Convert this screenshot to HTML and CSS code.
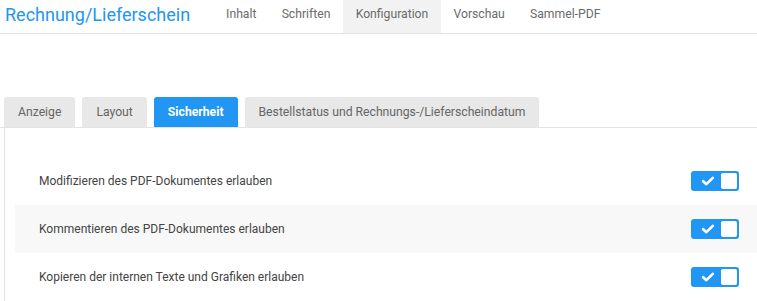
FILE: index.html
```html
<!DOCTYPE html>
<html lang="de">
<head>
    <meta charset="UTF-8">
    <title>Rechnung/Lieferschein - Konfiguration</title>
    <link rel="stylesheet" href="styles.css">
</head>
<body>
    <!-- Kopfzeile -->
    <header class="topbar">
        <div class="title">Rechnung/Lieferschein</div>
        <nav class="menu">
            <a href="#">Inhalt</a>
            <a href="#">Schriften</a>
            <a href="#" class="active">Konfiguration</a>
            <a href="#">Vorschau</a>
            <a href="#">Sammel-PDF</a>
        </nav>
    </header>

    <!-- Reiter -->
    <div class="tabs">
        <button class="tab">Anzeige</button>
        <button class="tab">Layout</button>
        <button class="tab selected">Sicherheit</button>
        <button class="tab">Bestellstatus und Rechnungs-/Lieferscheindatum</button>
    </div>

    <!-- Einstellungen -->
    <section class="panel">
        <div class="row">
            <span>Modifizieren des PDF-Dokumentes erlauben</span>
            <div class="switch">
                <svg class="check" width="12" height="10" viewBox="0 0 12 10"><path d="M1.2 5.2 L4.4 8.2 L10.8 1.8" fill="none" stroke="#fff" stroke-width="2.6" stroke-linecap="round" stroke-linejoin="round"/></svg>
                <span class="knob"></span>
            </div>
        </div>
        <div class="row alt">
            <span>Kommentieren des PDF-Dokumentes erlauben</span>
            <div class="switch">
                <svg class="check" width="12" height="10" viewBox="0 0 12 10"><path d="M1.2 5.2 L4.4 8.2 L10.8 1.8" fill="none" stroke="#fff" stroke-width="2.6" stroke-linecap="round" stroke-linejoin="round"/></svg>
                <span class="knob"></span>
            </div>
        </div>
        <div class="row">
            <span>Kopieren der internen Texte und Grafiken erlauben</span>
            <div class="switch">
                <svg class="check" width="12" height="10" viewBox="0 0 12 10"><path d="M1.2 5.2 L4.4 8.2 L10.8 1.8" fill="none" stroke="#fff" stroke-width="2.6" stroke-linecap="round" stroke-linejoin="round"/></svg>
                <span class="knob"></span>
            </div>
        </div>
    </section>
</body>
</html>
```

FILE: styles.css
```css
* {
    margin: 0;
    padding: 0;
    box-sizing: border-box;
    font-family: 'Roboto', 'Liberation Sans', sans-serif;
}

body {
    background: #fff;
    overflow: hidden;
}

/* Kopfzeile */
.topbar {
    display: flex;
    align-items: stretch;
    height: 34px;
    border-bottom: 1px solid #e3e3e3;
    padding-left: 5px;
}

.title {
    color: #2196f3;
    font-size: 18px;
    line-height: 29px;
    width: 208.5px;
}

.menu {
    display: flex;
}

.menu a {
    color: #6b6b6b;
    text-decoration: none;
    font-size: 12.2px;
    line-height: 29px;
    padding: 0 12.6px;
}

.menu a.active {
    background: #f2f2f2;
}

/* Reiter */
.tabs {
    display: flex;
    gap: 7px;
    margin-top: 63px;
    padding-left: 4px;
    border-bottom: 1px solid #e3e3e3;
}

.tab {
    border: none;
    background: #e8e8e8;
    color: #666;
    font-size: 12.2px;
    height: 30px;
    padding: 0 14px;
    border-radius: 3px 3px 0 0;
    cursor: pointer;
}

.tab.selected {
    background: #2196f3;
    color: #fff;
    font-weight: bold;
}

/* Einstellungen */
.panel {
    margin-left: 4px;
    border-left: 1px solid #e3e3e3;
    padding: 29px 0 0 10px;
}

.row {
    display: flex;
    justify-content: space-between;
    align-items: center;
    height: 48px;
    padding: 0 18px 0 24px;
    font-size: 12px;
    color: #444;
}

.row.alt {
    background: #f8f8f8;
}

.switch {
    display: flex;
    align-items: center;
    width: 48px;
    height: 20px;
    background: #2196f3;
    border-radius: 3px;
    padding: 2px;
}

.check {
    margin: 0 7px 0 9px;
}

.knob {
    width: 16px;
    height: 16px;
    background: #fff;
    border-radius: 2px;
}
```
